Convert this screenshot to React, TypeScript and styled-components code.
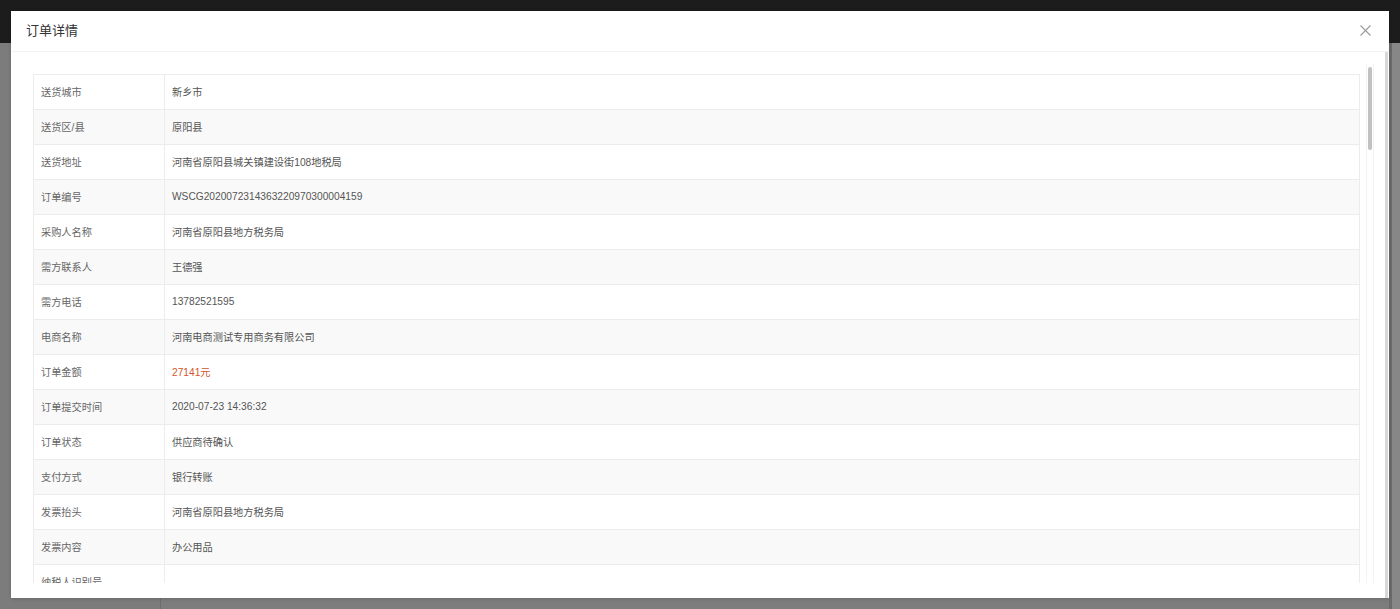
import React from "react";
import styled, { createGlobalStyle } from "styled-components";

const GlobalStyle = createGlobalStyle`
  html, body { margin: 0; padding: 0; width: 100%; height: 100%; overflow: hidden; }
  body { font-family: "Liberation Sans", "Noto Sans CJK SC", sans-serif; }
  * { box-sizing: border-box; }
`;

const Page = styled.div`
  position: relative;
  width: 1400px;
  height: 609px;
  display: flex;
  flex-direction: column;
  background: #7d7d7d;
`;

const TopBar = styled.div`
  height: 43px;
  flex: none;
  background: #1c1c1c;
`;

const PageBody = styled.div`
  flex: 1;
  display: flex;
`;

const Sidebar = styled.div`
  width: 161px;
  flex: none;
  border-right: 1px solid #6f6f6f;
  background: #7c7c7c;
`;

const Main = styled.div`
  flex: 1;
  background: #7d7d7d;
`;

const PageScroll = styled.div`
  width: 11px;
  flex: none;
  display: flex;
  background: #878787;
  &::before {
    content: "";
    width: 3px;
    background: #6b6b6b;
  }
`;

const Dialog = styled.div`
  position: absolute;
  left: 11px;
  top: 11px;
  width: 1378px;
  height: 587px;
  background: #fff;
  display: flex;
  flex-direction: column;
  box-shadow: 0 1px 4px rgba(0, 0, 0, 0.15);
`;

const Header = styled.div`
  height: 41px;
  flex: none;
  display: flex;
  align-items: center;
  justify-content: space-between;
  padding: 0 18px 2px 15px;
  border-bottom: 1px solid #f2f2f2;
`;

const Title = styled.div`
  font-size: 13px;
  color: #333;
  line-height: 1;
`;

const CloseButton = styled.button`
  width: 11px;
  height: 11px;
  padding: 0;
  border: none;
  background: transparent;
  cursor: pointer;
  display: flex;
  color: #9a9a9a;
`;

const Body = styled.div`
  position: relative;
  flex: 1;
  min-height: 0;
  display: flex;
  padding: 10px 10px 15px 10px;
  border-right: 3px solid #d8d8d8;
  margin-right: 1px;
`;

const Scroller = styled.div`
  flex: 1;
  overflow-y: auto;
  padding: 12px 15px 12px 12px;
  scrollbar-width: none;
  &::-webkit-scrollbar { width: 0; height: 0; }
`;

const ScrollTrack = styled.div`
  position: absolute;
  right: 11px;
  top: 12px;
  bottom: 15px;
  width: 8px;
  border-left: 1px solid #f3f3f3;
  border-right: 1px solid #f3f3f3;
`;

const ScrollThumb = styled.div`
  position: absolute;
  left: 1px;
  top: 3px;
  width: 4px;
  height: 83px;
  border-radius: 2px;
  background: #c1c1c1;
`;

const Table = styled.div`
  border: 1px solid #ececec;
  border-bottom: none;
`;

const Row = styled.div<{ $striped: boolean }>`
  display: grid;
  grid-template-columns: 131px 1fr;
  height: 35px;
  border-bottom: 1px solid #ececec;
  background: ${(p) => (p.$striped ? "#f9f9f9" : "#fff")};
`;

const Label = styled.div`
  display: flex;
  align-items: center;
  padding: 0 0 2px 7px;
  border-right: 1px solid #ececec;
  font-size: 10.2px;
  color: #666;
  white-space: nowrap;
`;

const Value = styled.div<{ $accent?: boolean }>`
  display: flex;
  align-items: center;
  padding: 0 0 2px 7px;
  font-size: 10.2px;
  color: ${(p) => (p.$accent ? "#d4562b" : "#555")};
  white-space: nowrap;
`;

type Field = { label: string; value: string; accent?: boolean };

const baseFields: Field[] = [
  { label: "送货城市", value: "新乡市" },
  { label: "送货区/县", value: "原阳县" },
  { label: "送货地址", value: "河南省原阳县城关镇建设街108地税局" },
  { label: "订单编号", value: "WSCG2020072314363220970300004159" },
  { label: "采购人名称", value: "河南省原阳县地方税务局" },
  { label: "需方联系人", value: "王德强" },
  { label: "需方电话", value: "13782521595" },
  { label: "电商名称", value: "河南电商测试专用商务有限公司" },
  { label: "订单金额", value: "27141元", accent: true },
  { label: "订单提交时间", value: "2020-07-23 14:36:32" },
  { label: "订单状态", value: "供应商待确认" },
  { label: "支付方式", value: "银行转账" },
  { label: "发票抬头", value: "河南省原阳县地方税务局" },
  { label: "发票内容", value: "办公用品" },
  { label: "纳税人识别号", value: "" },
  { label: "发票类型", value: "增值税普通发票" },
  { label: "收票人", value: "王德强" },
  { label: "收票人电话", value: "13782521595" },
  { label: "收票地址", value: "河南省原阳县城关镇建设街108地税局" },
  { label: "预算单位编码", value: "410724001" },
  { label: "采购方式", value: "网上商城直购" },
  { label: "配送方式", value: "供应商配送" },
  { label: "期望到货时间", value: "2020-07-30" },
  { label: "订单备注", value: "" },
  { label: "商品数量", value: "12" },
];

const products = [
  ["得力(deli) 复印纸 A4 70g 500张/包", "68", "20"],
  ["晨光(M&G) 中性笔 0.5mm 黑色 12支/盒", "24", "30"],
  ["惠普(HP) 原装硒鼓 CF230A", "459", "6"],
  ["得力(deli) 文件柜 四门铁皮柜", "1280", "4"],
  ["联想(Lenovo) 台式电脑 启天M420", "4599", "2"],
  ["得力(deli) 订书机 12号", "18", "15"],
  ["齐心(Comix) 档案盒 A4 55mm", "9", "60"],
  ["惠普(HP) 激光打印机 M203dn", "1899", "1"],
  ["得力(deli) 计算器 12位", "35", "10"],
  ["晨光(M&G) 便利贴 76*76mm", "6", "40"],
  ["得力(deli) 办公椅 人体工学", "399", "3"],
  ["齐心(Comix) 文件夹 A4 双夹", "12", "26"],
];

const productFields: Field[] = products.flatMap(([name, price, qty], i) => [
  { label: `商品${i + 1}名称`, value: name },
  { label: "商品单价", value: `${price}元` },
  { label: "购买数量", value: qty },
  { label: "小计", value: `${Number(price) * Number(qty)}元` },
  { label: "商品状态", value: "待确认" },
]);

const fields: Field[] = [...baseFields, ...productFields];

const CloseIcon = () => (
  <svg width="11" height="11" viewBox="0 0 11 11" fill="none">
    <path d="M0.5 0.5L10.5 10.5M10.5 0.5L0.5 10.5" stroke="currentColor" strokeWidth="1.1" />
  </svg>
);

export default function App() {
  return (
    <>
      <GlobalStyle />
      <Page>
        <TopBar />
        <PageBody>
          <Sidebar />
          <Main />
          <PageScroll />
        </PageBody>
        <Dialog>
          <Header>
            <Title>订单详情</Title>
            <CloseButton aria-label="关闭">
              <CloseIcon />
            </CloseButton>
          </Header>
          <Body>
            <Scroller>
              <Table>
                {fields.map((f, i) => (
                  <Row key={i} $striped={i % 2 === 1}>
                    <Label>{f.label}</Label>
                    <Value $accent={f.accent}>{f.value}</Value>
                  </Row>
                ))}
              </Table>
            </Scroller>
            <ScrollTrack>
              <ScrollThumb />
            </ScrollTrack>
          </Body>
        </Dialog>
      </Page>
    </>
  );
}
